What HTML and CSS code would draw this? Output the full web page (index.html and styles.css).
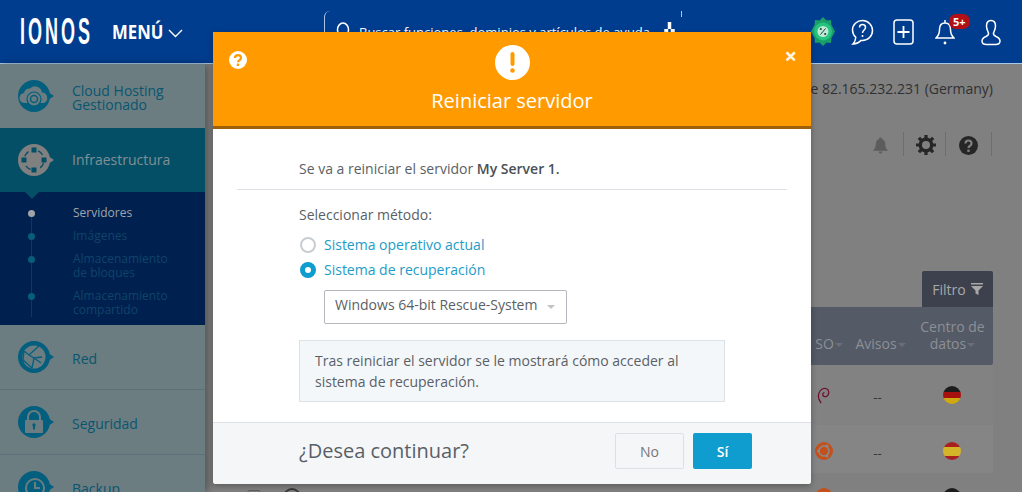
FILE: index.html
```html
<!DOCTYPE html>
<html lang="es">
<head>
<meta charset="utf-8">
<title>Reiniciar servidor</title>
<link rel="stylesheet" href="styles.css">
</head>
<body>
<header class="topbar">
  <div class="brand"><span class="logo">IONOS</span></div>
  <div class="menu-btn"><span class="menu-label">MENÚ</span>
    <svg class="chev" width="15" height="9" viewBox="0 0 15 9"><path d="M1 1l6.500 6.500L14 1" fill="none" stroke="#fff" stroke-width="1.400"/></svg>
  </div>
  <div class="search">
    <svg class="search-ico" width="14" height="21" viewBox="0 0 14 21"><ellipse cx="7" cy="8" rx="5.500" ry="7" fill="none" stroke="#fff" stroke-width="1.600"/></svg>
    <span class="search-text">Buscar funciones, dominios y artículos de ayuda</span>
    <svg class="mic" width="11" height="11" viewBox="0 0 11 11"><path d="M4 0h3v11H4zM0.500 7v4h10V7" fill="#fff" stroke="#fff" stroke-width=".5"/></svg>
  </div>
  <div class="top-icons">
    <svg class="promo" width="24" height="32" viewBox="0 0 24 32"><path d="M12 1l3.500 3.500 4.500-.5.500 5 3.500 6.500-3.500 6.500-.5 5-4.500-.5L12 30l-3.500-3.500-4.500.5-.5-5L0 15.500 3.500 9l.5-5 4.500.5z" fill="#1a9f68"/><circle cx="12" cy="15.500" r="9" fill="#25c47f"/><circle cx="12" cy="15.500" r="5.500" fill="#c4e8d6"/><path d="M14.500 12.500l-5 6" stroke="#0c4a3a" stroke-width="1"/><circle cx="9.800" cy="13" r="1.100" fill="#0c4a3a"/><circle cx="14.200" cy="18" r="1.100" fill="#0c4a3a"/></svg>
    <svg class="ti" width="23" height="27" viewBox="0 0 23 27"><path d="M11.500 1.500C6 1.500 1.500 5.500 1.500 11c0 3 1.300 5.500 3.300 7.300-.2 2.500-1 4.800-2.800 6.700 3.500-.3 6.300-1.700 8-3.600.5.100 1 .1 1.500.1 5.500 0 10-4.500 10-10S17 1.500 11.500 1.500z" fill="none" stroke="#fff" stroke-width="1.500"/><path d="M8.500 8.500c0-4 6-4 6 0 0 2.500-3 2.500-3 5.500" fill="none" stroke="#fff" stroke-width="1.500"/><circle cx="11.500" cy="17" r="1" fill="#fff"/></svg>
    <svg class="ti" width="21" height="26" viewBox="0 0 21 26"><rect x="1" y="1" width="19" height="24" rx="3" fill="none" stroke="#fff" stroke-width="1.500"/><path d="M10.500 7v12M4.500 13h12" stroke="#fff" stroke-width="1.800"/></svg>
    <span class="bell-wrap">
      <svg class="ti" width="20" height="27" viewBox="0 0 20 27"><path d="M10 1v3M10 4c-4 0-5.500 3-5.500 6.500 0 4-1.300 6.500-3.500 8.500h18c-2.200-2-3.500-4.500-3.500-8.500C15.500 7 14 4 10 4z" fill="none" stroke="#fff" stroke-width="1.500"/><circle cx="10" cy="24" r="1.400" fill="#fff"/></svg>
      <span class="badge">5+</span>
    </span>
    <svg class="ti" width="20" height="27" viewBox="0 0 20 27"><path d="M10 1.500c-3.200 0-4.500 2.500-4.500 5.500 0 3 1.300 5 2 7 .4 1.500-.5 2.500-2.500 3.500-2.300 1-4 2-4 4.500 0 2.200 2 3.500 4.500 3.500h9c2.500 0 4.500-1.300 4.500-3.500 0-2.500-1.700-3.500-4-4.500-2-1-2.900-2-2.500-3.500.7-2 2-4 2-7 0-3-1.300-5.500-4.500-5.500z" fill="none" stroke="#fff" stroke-width="1.500"/></svg>
  </div>
</header>

<div class="app">
  <nav class="sidebar">
    <div class="nav-item">
      <svg class="nav-ico" width="38" height="32" viewBox="0 0 38 32"><circle cx="16" cy="16" r="16" fill="#045f7f"/><path d="M30 12l6 4-6 4z" fill="#045f7f"/><path d="M7 23a5 5 0 0 1-1-10 5.500 5.500 0 0 1 6-4.500 7 7 0 0 1 12 4 5.500 5.500 0 0 1 2 10.500z" fill="#6b7d80"/><circle cx="16" cy="19" r="7" fill="#6b7d80" stroke="#045f7f" stroke-width="1.200"/><circle cx="16" cy="19" r="3.500" fill="none" stroke="#045f7f" stroke-width="1.500"/></svg>
      <span class="nav-text">Cloud Hosting<br>Gestionado</span>
    </div>
    <div class="nav-item active">
      <svg class="nav-ico" width="38" height="32" viewBox="0 0 38 32"><circle cx="16" cy="16" r="16" fill="#808080"/><path d="M30 12l6 4-6 4z" fill="#808080"/><circle cx="16" cy="16" r="10" fill="none" stroke="#054f66" stroke-width="1.300" stroke-dasharray="6 10" stroke-dashoffset="-3"/><rect x="13.500" y="3.500" width="5" height="5" fill="#054f66"/><rect x="13.500" y="23.500" width="5" height="5" fill="#054f66"/><rect x="3.500" y="13.500" width="5" height="5" fill="#054f66"/><rect x="23.500" y="13.500" width="5" height="5" fill="#054f66"/></svg>
      <span class="nav-text">Infraestructura</span>
    </div>
    <ul class="subnav">
      <li class="current">Servidores</li>
      <li>Imágenes</li>
      <li>Almacenamiento<br>de bloques</li>
      <li>Almacenamiento<br>compartido</li>
    </ul>
    <div class="nav-item">
      <svg class="nav-ico" width="38" height="32" viewBox="0 0 38 32"><circle cx="16" cy="16" r="16" fill="#045f7f"/><path d="M30 12l6 4-6 4z" fill="#045f7f"/><circle cx="16" cy="16" r="11.500" fill="#6b7d80"/><path d="M6 10l5 4 10-9M11 14l5 3 8-1M16 17l-2 10M16 17l7 5M6 10l-1 9 9 8" stroke="#045f7f" stroke-width="1.300" fill="none"/></svg>
      <span class="nav-text">Red</span>
    </div>
    <div class="nav-item">
      <svg class="nav-ico" width="38" height="32" viewBox="0 0 38 32"><circle cx="16" cy="16" r="16" fill="#045f7f"/><path d="M30 12l6 4-6 4z" fill="#045f7f"/><path d="M10 14v-3a6 6 0 0 1 12 0v3" fill="none" stroke="#6b7d80" stroke-width="2"/><rect x="7" y="14" width="18" height="13" rx="1" fill="#6b7d80"/><circle cx="16" cy="19" r="1.700" fill="#045f7f"/><rect x="15" y="19" width="2" height="4.500" fill="#045f7f"/></svg>
      <span class="nav-text">Seguridad</span>
    </div>
    <div class="nav-item">
      <svg class="nav-ico" width="38" height="32" viewBox="0 0 38 32"><circle cx="16" cy="16" r="16" fill="#045f7f"/><path d="M30 12l6 4-6 4z" fill="#045f7f"/><circle cx="17" cy="17" r="9" fill="none" stroke="#6b7d80" stroke-width="2"/><path d="M17 11v6h5" fill="none" stroke="#6b7d80" stroke-width="2"/></svg>
      <span class="nav-text">Backup</span>
    </div>
  </nav>

  <main class="content">
    <p class="ip">Usted accede desde 82.165.232.231 (Germany)</p>
    <div class="toolbar">
      <span class="tb-cell tb-bell"><svg width="16" height="17" viewBox="0 0 16 17"><path d="M8 0c-1 0-1.500.7-1.500 1.500C4 2.300 3 4.500 3 7c0 3-1 5-3 7h16c-2-2-3-4-3-7 0-2.500-1-4.700-3.500-5.500C9.500.7 9 0 8 0zM6 15a2 2 0 0 0 4 0z" fill="#5c5c5c"/></svg></span>
      <span class="tb-cell tb-gear"><svg width="20" height="20" viewBox="0 0 21 21"><circle cx="10.500" cy="10.500" r="6" fill="none" stroke="#262626" stroke-width="3.600"/><path d="M10.500 0v4M10.500 17v4M0 10.500h4M17 10.500h4M3 3l3 3M15 15l3 3M18 3l-3 3M6 15l-3 3" stroke="#262626" stroke-width="3.400"/></svg></span>
      <span class="tb-cell tb-help"><svg width="19" height="19" viewBox="0 0 19 19"><circle cx="9.500" cy="9.500" r="9.500" fill="#262626"/><path d="M6.500 7.500c0-4 6-4 6 0 0 2.500-3 2-3 4.500" fill="none" stroke="#808080" stroke-width="2.200"/><rect x="8.300" y="13.500" width="2.400" height="2.400" fill="#808080"/></svg></span>
    </div>
    <div class="filter-row">
      <div class="filter">Filtro
        <svg width="12" height="12" viewBox="0 0 12 12"><path d="M0 0h12v1.500H0zM0 3h12L7.500 7.500V12l-3-1.500v-3z" fill="#a8a8a8"/></svg>
      </div>
    </div>
    <div class="table">
      <div class="thead">
        <span class="th th-so">SO<i class="caret"></i></span>
        <span class="th th-av">Avisos<i class="caret"></i></span>
        <span class="th th-dc">Centro de<br>datos<i class="caret"></i></span>
      </div>
      <div class="tr tr-one">
        <span class="td td-so"><svg width="14" height="19" viewBox="0 0 14 20"><path d="M4 18C1 14 0 9 3 5c3-4 9-3 9 2 0 3-3 5-5 4-2-1-1.500-4 .5-4" fill="none" stroke="#6e0f2e" stroke-width="1.300"/></svg></span>
        <span class="td td-av">--</span>
        <span class="td td-dc"><span class="flag flag-de"></span></span>
      </div>
      <div class="tr tr-alt">
        <span class="td td-so"><svg width="18" height="18" viewBox="0 0 18 18"><circle cx="9" cy="9" r="9" fill="#c4511b"/><circle cx="9" cy="9" r="5" fill="none" stroke="#8a8a8a" stroke-width="1.500"/><circle cx="3.500" cy="9" r="1.500" fill="#8a8a8a"/><circle cx="12" cy="4" r="1.500" fill="#8a8a8a"/><circle cx="12" cy="14" r="1.500" fill="#8a8a8a"/></svg></span>
        <span class="td td-av">--</span>
        <span class="td td-dc"><span class="flag flag-es"></span></span>
      </div>
      <div class="tr tr-three">
        <span class="row-lead"><span class="check"></span><span class="state"></span></span>
        <span class="td td-so"><svg width="18" height="18" viewBox="0 0 18 18"><circle cx="9" cy="9" r="9" fill="#c4511b"/></svg></span>
        <span class="td td-av"></span>
        <span class="td td-dc"><span class="flag flag-de"></span></span>
      </div>
    </div>
  </main>
</div>

<section class="modal">
  <div class="modal-head">
    <svg class="m-help" width="18" height="18" viewBox="0 0 18 18"><circle cx="9" cy="9" r="9" fill="#fff"/><path d="M6 7c0-3.800 6-3.800 6 0 0 2.300-3 2-3 4.300" fill="none" stroke="#ff9b00" stroke-width="2.200"/><rect x="7.800" y="12.600" width="2.400" height="2.400" fill="#ff9b00"/></svg>
    <span class="m-close">×</span>
    <svg class="m-alert" width="35" height="35" viewBox="0 0 35 35"><circle cx="17.500" cy="17.500" r="17.500" fill="#fff"/><rect x="15.500" y="7" width="4" height="14" rx="2" fill="#ff9b00"/><circle cx="17.500" cy="25.500" r="2.300" fill="#ff9b00"/></svg>
    <h1 class="m-title">Reiniciar servidor</h1>
  </div>
  <div class="modal-body">
    <p class="intro">Se va a reiniciar el servidor <b>My Server 1.</b></p>
    <div class="form">
      <p class="label">Seleccionar método:</p>
      <div class="radio"><span class="r-dot"></span>Sistema operativo actual</div>
      <div class="radio"><span class="r-dot on"></span>Sistema de recuperación</div>
      <div class="select">Windows 64-bit Rescue-System<i class="sel-caret"></i></div>
      <div class="note">Tras reiniciar el servidor se le mostrará cómo acceder al sistema de recuperación.</div>
    </div>
  </div>
  <div class="modal-foot">
    <span class="q">¿Desea continuar?</span>
    <div class="btns">
      <button class="btn btn-no">No</button>
      <button class="btn btn-yes">Sí</button>
    </div>
  </div>
</section>
</body>
</html>
```
FILE: styles.css
```css
* { box-sizing: border-box; }
html, body { margin: 0; height: 492px; overflow: hidden; }
body { position: relative; background: #808080; font-family: "Open Sans", sans-serif; color: #3a3a3a; }

.topbar { height: 64px; background: #003d8f; border-bottom: 1px solid #a9c7e8; display: flex; align-items: center; color: #fff; }
.brand { width: 112px; padding-left: 20px; height: 34px; overflow: visible; }
.logo { display: inline-block; font: 700 36px/34px "Liberation Sans", sans-serif; letter-spacing: 6px; transform: scaleX(.5); transform-origin: left center; white-space: nowrap; }
.menu-btn { display: flex; align-items: center; width: 212px; margin-top: 2px; }
.menu-label { font: 700 19px/1 "Open Sans", sans-serif; display: inline-block; transform: scaleX(.88); transform-origin: left center; }
.chev { margin-top: 2px; margin-left: -2px; }
.search { width: 358px; height: 53px; align-self: flex-start; margin-top: 11px; display: flex; align-items: flex-start; position: relative; padding: 11px 0 0 11px; border-left: 1px solid #a9c7e8; border-radius: 6px 0 0 0; }
.search::after { content: ""; position: absolute; right: 0; top: 0; width: 1px; height: 6px; background: #a9c7e8; }
.search-text { font-size: 13px; line-height: 18px; margin-left: 9px; margin-top: 1px; white-space: nowrap; }
.mic { position: absolute; left: 339px; top: 11px; }
.top-icons { display: flex; align-items: center; margin-left: 129px; margin-top: 1px; gap: 19px; }
.promo { margin-right: -3px; }
.ti { display: block; }
.bell-wrap { position: relative; display: block; margin: 0 7px 0 2px; }
.badge { position: absolute; left: 14px; top: -5px; background: #b30f16; color: #fff; font: 700 11px/15px "Open Sans", sans-serif; padding: 0 4px; border-radius: 7px; }

.app { display: flex; height: 428px; }
.sidebar { width: 205px; flex: none; background: #6b7d80; box-shadow: 3px 0 8px rgba(0,0,0,.35); overflow: hidden; position: relative; z-index: 1; }
.nav-item { height: 65px; display: flex; align-items: center; padding-left: 18px; border-bottom: 1px solid #5b7079; color: #0a5570; font-size: 14px; line-height: 14px; gap: 16px; }
.nav-text { margin-top: 4px; }
.nav-item:first-child { height: 64px; border-bottom: 0; }
.nav-item.active { height: 64px; background: #054f66; color: #7f8f95; border-bottom: 0; position: relative; }
.nav-item.active .nav-text { margin-top: 0; }
.nav-item.active::after { content: ""; position: absolute; left: 25px; bottom: -7px; border: 7px solid transparent; border-bottom: 0; border-top-color: #054f66; z-index: 1; }
.nav-ico { flex: none; }
.subnav { list-style: none; margin: 0; height: 133px; padding: 14px 0 0 73px; background: #002050; color: #0f4468; font-size: 12px; line-height: 14px; position: relative; }
.subnav::before { content: ""; position: absolute; left: 31px; top: 18px; bottom: 8px; width: 1px; background: #0a3a5c; }
.subnav li { margin-bottom: 9px; position: relative; }
.subnav li::before { content: ""; position: absolute; left: -45px; top: 4px; width: 7px; height: 7px; border-radius: 50%; background: #065d7c; }
.subnav li.current { color: #a2a6ad; }
.subnav li.current::before { background: #a0a4a8; }

.content { flex: 1; min-width: 0; padding-right: 29px; display: flex; flex-direction: column; }
.ip { margin: 16px 0 0; text-align: right; font-size: 14px; line-height: 18px; color: #303030; white-space: nowrap; }
.toolbar { display: flex; justify-content: flex-end; margin-top: 34px; height: 24px; margin-right: 1px; }
.tb-cell { display: flex; align-items: center; justify-content: center; border-right: 1px solid #6e6e6e; height: 24px; padding-top: 2px; }
.tb-bell { width: 31px; padding-right: 15px; }
.tb-gear { width: 42px; padding-left: 2px; }
.tb-help { width: 46px; }
.filter-row { display: flex; justify-content: flex-end; margin-top: 115px; }
.filter { width: 71px; height: 36px; background: #3c414d; color: #a8a8a8; border-radius: 2px 2px 0 0; font-size: 14px; display: flex; align-items: center; justify-content: center; gap: 5px; }
.table { display: flex; flex-direction: column; margin-left: 30px; }
.thead { height: 58px; background: #545a66; display: flex; justify-content: flex-end; align-items: flex-end; color: #8c9096; font-size: 14px; line-height: 17px; padding-bottom: 13px; text-align: center; border-radius: 0 0 2px 2px; flex: none; }
.th { display: block; }
.caret { display: inline-block; width: 0; height: 0; margin-left: 1px; border: 4px solid transparent; border-bottom: 0; border-top-color: #6a6e78; vertical-align: middle; }
.th-so { width: 40px; }
.th-av { width: 63px; }
.th-dc { width: 81px; }
.tr { height: 48px; flex: none; display: flex; justify-content: flex-end; align-items: center; }
.tr-one { height: 60px; background: #828282; }
.tr-alt { background: #858585; padding-top: 4px; }
.row-lead { margin-right: auto; margin-left: 12px; display: flex; align-items: center; gap: 22px; }
.check { width: 14px; height: 14px; border: 1px solid #5c5c5c; border-radius: 3px; }
.state { width: 18px; height: 18px; border: 2px solid #3a3a3a; border-radius: 50%; }
.td { display: flex; justify-content: center; align-items: center; font-size: 13px; color: #333; }
.td-so { width: 40px; }
.td-av { width: 67px; padding-top: 3px; }
.td-dc { width: 82px; }
.flag { width: 18px; height: 18px; border-radius: 50%; display: block; }
.flag-de { background: linear-gradient(#1c1c1c 0 33%, #a81010 33% 66%, #d0a810 66%); }
.flag-es { background: linear-gradient(#a82020 0 25%, #d4b428 25% 75%, #a82020 75%); }

.modal { position: absolute; left: 213px; top: 32px; width: 598px; height: 452px; background: #fff; border-radius: 0 0 3px 3px; display: flex; flex-direction: column; box-shadow: 0 2px 6px rgba(0,0,0,.3); z-index: 5; }
.modal-head { height: 97px; background: #ff9b00; border-bottom: 3px solid #9c5f0a; position: relative; display: flex; flex-direction: column; align-items: center; padding-top: 13px; color: #fff; flex: none; }
.m-help { position: absolute; left: 16px; top: 19px; }
.m-close { position: absolute; right: 14px; top: 12px; font: 700 22px/1 "Open Sans", sans-serif; color: #fff8ec; }
.m-title { margin: 9px 0 0; font-size: 20px; line-height: 24px; font-weight: 400; }
.modal-body { flex: 1; padding: 0 24px; min-height: 0; }
.intro { margin: 0; padding: 31px 62px 11px; border-bottom: 1px solid #dde0e4; font-size: 14px; line-height: 18px; color: #5a5f66; }
.intro b { font-weight: 600; color: #4a4f55; }
.form { padding: 16px 62px 0; font-size: 14px; line-height: 18px; color: #5a5f66; }
.label { margin: 0 0 8px; }
.radio { display: flex; align-items: center; gap: 8px; color: #1d9cc7; height: 25px; }
.r-dot { width: 16px; height: 16px; margin-left: 1px; border-radius: 50%; border: 2px solid #c9cdd2; background: #fff; flex: none; }
.r-dot.on { border: 5px solid #0f9ccf; }
.select { position: relative; margin: 8px 0 0 25px; width: 243px; height: 34px; border: 1px solid #b4b8bc; border-radius: 2px; padding-left: 10px; line-height: 28px; }
.sel-caret { position: absolute; right: 11px; top: 14px; border: 4px solid transparent; border-bottom: 0; border-top-color: #c0c4c8; }
.note { margin-top: 16px; width: 426px; height: 62px; padding: 9px 15px; background: #f4f7fa; border: 1px solid #dde2e6; line-height: 21px; }
.modal-foot { height: 62px; flex: none; background: #f4f6f8; border-top: 1px solid #dde0e4; border-radius: 0 0 3px 3px; display: flex; align-items: flex-start; justify-content: space-between; padding: 10px 59px 0 86px; }
.q { font-size: 20px; line-height: 36px; color: #5a5f66; }
.btns { display: flex; gap: 9px; }
.btn { height: 36px; font: 400 14px "Open Sans", sans-serif; border-radius: 2px; padding: 0; }
.btn-no { width: 69px; background: #f4f6f8; border: 1px solid #dde0e4; color: #777; }
.btn-yes { width: 59px; background: #0f9ccf; border: 0; color: #fff; font-weight: 600; }
```
